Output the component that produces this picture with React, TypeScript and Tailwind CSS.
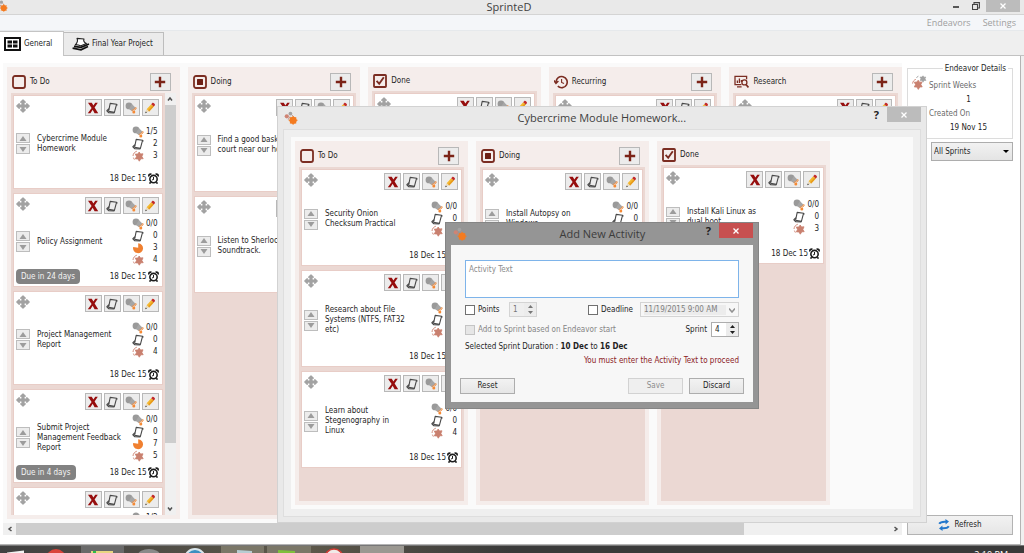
import React from "react";
import clsx from "clsx";

type CardData = {
  text?: string;
  points?: string;
  notes?: string;
  pie?: string;
  sprint?: string;
  date?: string;
  due?: string;
  short?: boolean;
};

type ColumnData = {
  title: string;
  icon: "todo" | "doing" | "done" | "recurring" | "research";
  cards: CardData[];
};

const boardColumns: ColumnData[] = [
  {
    title: "To Do",
    icon: "todo",
    cards: [
      { text: "Cybercrime Module\nHomework", points: "1/5", notes: "2", sprint: "3", date: "18 Dec 15" },
      { text: "Policy Assignment", points: "0/0", notes: "0", pie: "3", sprint: "4", date: "18 Dec 15", due: "Due in 24 days" },
      { text: "Project Management\nReport", points: "0/0", notes: "0", sprint: "4", date: "18 Dec 15" },
      { text: "Submit Project\nManagement Feedback\nReport", points: "0/0", notes: "0", pie: "7", sprint: "5", date: "18 Dec 15", due: "Due in 4 days" },
      { points: "1/2", notes: "0", pie: "1", sprint: "5" },
    ],
  },
  {
    title: "Doing",
    icon: "doing",
    cards: [{ text: "Find a good basketball\ncourt near our house" }, { text: "Listen to Sherlock\nSoundtrack." }],
  },
  { title: "Done", icon: "done", cards: [{}] },
  { title: "Recurring", icon: "recurring", cards: [{ short: true }] },
  { title: "Research", icon: "research", cards: [{ short: true }] },
];

const homeworkColumns: ColumnData[] = [
  {
    title: "To Do",
    icon: "todo",
    cards: [
      { text: "Security Onion\nChecksum Practical", points: "0/0", notes: "0", sprint: "3", date: "18 Dec 15" },
      { text: "Research about File\nSystems (NTFS, FAT32\netc)", points: "0/0", notes: "0", sprint: "4", date: "18 Dec 15" },
      { text: "Learn about\nStegenography in\nLinux", points: "0/0", notes: "0", sprint: "4", date: "18 Dec 15" },
    ],
  },
  {
    title: "Doing",
    icon: "doing",
    cards: [{ text: "Install Autopsy on\nWindows", points: "0/0", notes: "0", sprint: "3", date: "18 Dec 15" }],
  },
  {
    title: "Done",
    icon: "done",
    cards: [{ text: "Install Kali Linux as\ndual boot", points: "0/0", notes: "0", sprint: "3", date: "18 Dec 15" }],
  },
];

/* Icons */

function LogoIcon({ className }: { className?: string }) {
  return (
    <svg viewBox="0 0 12 12" className={className}>
      <circle cx="5.5" cy="2.2" r="1.6" fill="#a3a3a3" />
      <circle cx="2.4" cy="4.6" r="1.8" fill="#cf8474" />
      <path d="M5 4.8 3.6 7.4M6.6 3.4l1.6 1.4" stroke="#b98b80" strokeWidth="0.8" />
      <circle cx="7.8" cy="8" r="3.1" fill="#f47b20" />
      <path d="M7.8 4.2v7.6M4 8h7.6M5.2 5.4l5.2 5.2M10.4 5.4l-5.2 5.2" stroke="#f47b20" strokeWidth="0.9" />
    </svg>
  );
}

function MoveIcon() {
  return (
    <svg viewBox="0 0 14 14" className="h-3.5 w-3.5" fill="#a2a2a2" stroke="#a2a2a2" strokeLinejoin="round">
      <path d="M7 .8 9.400 3.200H4.600zM7 13.200 4.600 10.800h4.800zM.8 7l2.400-2.400v4.800zM13.200 7l-2.400 2.400V4.600z" strokeWidth="1.2" />
      <path d="M7 3v8M3 7h8" strokeWidth="3.200" />
    </svg>
  );
}

function CrossIcon() {
  return (
    <svg viewBox="0 0 12 12" className="h-3 w-3">
      <path d="M1 .8h3.800L6.400 3.600 8.200.8h2.600L7.600 5.400l3.600 5.800H7.600L5.700 7.800 3.400 11.200H.8l3.800-5.300z" fill="#960e0e" />
    </svg>
  );
}

function NoteIcon() {
  return (
    <svg viewBox="0 0 12 12" className="h-3 w-3" fill="none" stroke="#484848" strokeLinejoin="round">
      <path d="M4.200 1.400 10.600 2.200 8.400 10.400 2.600 9.200z" strokeWidth="1.100" />
      <path d="M10.600 2.200 11.200 3.400M3 6.800.9 8.800l1.700 1.800 5.800.2" strokeWidth="1.200" />
    </svg>
  );
}

function TorchIcon() {
  return (
    <svg viewBox="0 0 12 12" className="h-3 w-3">
      <circle cx="4" cy="3.900" r="3.400" fill="#9a9a9a" />
      <path d="M4 6.900 7 9.200 10.800 6 6.800 2z" fill="#a6a6a6" />
      <path d="m6.800 8.400 1.600-.4 2.400-2.600.4 1.400-2 1.600" stroke="#ef8b3e" strokeWidth="0.900" fill="none" />
      <circle cx="8.800" cy="10" r="1.500" fill="#f58a35" />
    </svg>
  );
}

function PencilIcon() {
  return (
    <svg viewBox="0 0 12 12" className="h-3 w-3">
      <path d="m2.6 7.2 4.6-5 2.6 2.2-4.6 5z" fill="#f4b92f" />
      <path d="m4 8.4 4.6-5 1.2 1-4.6 5z" fill="#e79a1d" />
      <path d="M7.2 2.2 8.3 1c.8-.9 3.4 1.2 2.6 2.2L9.8 4.4z" fill="#c22a2a" />
      <path d="M2.6 7.2 1.4 10.8l3.8-1.4z" fill="#ead9b8" />
      <path d="m1.8 9.5-.6 1.7 1.8-.7z" fill="#333" />
    </svg>
  );
}

function SprintIcon() {
  return (
    <svg viewBox="0 0 12 12" className="h-3 w-3">
      <path d="m7.200 2 1.300 2 2.500-.2L9.900 6.400l1.300 2.300-2.400.1-1.500 2.400-1.400-2.300-2.500 0 1.100-2.500-1.200-2.300 2.500-.1z" fill="#c9806f" stroke="#c9806f" strokeWidth="0.800" />
      <path d="M4.800 1.200C2.600 2 1.200 3.600 1 6M1.400 7.600l1 2" fill="none" stroke="#d08c7c" strokeWidth="1" />
    </svg>
  );
}

function SprintWeeksIcon() {
  return (
    <svg viewBox="0 0 15 15" className="h-[15px] w-[15px]">
      <path d="m11 .8 1 1.400 1.800-.2-.8 1.800 1 1.600-1.900.1L11 7.200 9.900 5.500 8 5.400l.9-1.700L8 2l1.900.1z" fill="#a2a2a2" stroke="#a2a2a2" strokeWidth="0.600" />
      <path d="M6.400 1.200 4.400 2.600" stroke="#a2a2a2" strokeWidth="1" />
      <path d="m6.200 5.200 1.300 2 2.500-.2-1.100 2.600 1.300 2.300-2.400.1-1.500 2.400L4.900 12l-2.500 0 1.100-2.500-1.200-2.300 2.500-.1z" fill="#c9806f" stroke="#c9806f" strokeWidth="0.800" />
      <path d="M3.800 4.400C2 5 .8 6.400.6 8.600" fill="none" stroke="#d08c7c" strokeWidth="1" />
    </svg>
  );
}

function PieIcon() {
  return (
    <svg viewBox="0 0 12 12" className="h-3 w-3">
      <path d="M6.200 5.800V1.200A5 5 0 1 1 1.200 5z" fill="#f08030" />
    </svg>
  );
}

function AlarmIcon() {
  return (
    <svg viewBox="0 0 12 12" className="h-[11px] w-[11px]" fill="none" stroke="#1c1c1c">
      <circle cx="6" cy="6.600" r="4" strokeWidth="1.700" />
      <path d="M6 4.400v2.400l-1.400.9" strokeWidth="1.100" />
      <path d="M1 3.800C.6 1.800 2 .8 3.800 1.400M11 3.800C11.400 1.800 10 .8 8.200 1.400" strokeWidth="1.800" />
      <path d="m3 10-1.400 1.600M9 10l1.400 1.600" strokeWidth="1.700" />
    </svg>
  );
}

function PlusIcon() {
  return (
    <svg viewBox="0 0 12 12" className="h-3 w-3">
      <path d="M6 .8v10.4M.8 6h10.4" stroke="#7b2418" strokeWidth="2.4" />
    </svg>
  );
}

function ColumnIcon({ name }: { name: ColumnData["icon"] }) {
  if (name === "recurring") {
    return (
      <svg viewBox="0 0 14 14" className="h-3.5 w-3.5" fill="none" stroke="#7b2d22" strokeWidth="1.6">
        <path d="M2 7a5.6 5.6 0 1 1 1.8 4.2" />
        <path d="M0 5.6 2 8.2l2.4-2.2" />
        <path d="M7.6 4v3.4l2.4 1.2" strokeWidth="1.1" />
      </svg>
    );
  }
  if (name === "research") {
    return (
      <svg viewBox="0 0 15 14" className="h-3.5 w-[15px]" fill="none" stroke="#7b2d22" strokeWidth="1.3">
        <path d="M7.4 9.6H1V1.4h11.6v2.8M3 11.8h4.6" />
        <path d="M3.4 8V5.6M5.4 8V3.6M7.4 7V5" strokeWidth="1.3" />
        <circle cx="10.4" cy="7.4" r="2.5" />
        <path d="m12 9.4 2.4 3" strokeWidth="1.6" />
      </svg>
    );
  }
  return (
    <svg viewBox="0 0 14 14" className="h-3.5 w-3.5" fill="none" stroke="#7b2d22">
      <rect x="1" y="1" width="12" height="12" rx={name === "done" ? 0.8 : 2} strokeWidth="1.8" />
      {name === "doing" && <rect x="4" y="4" width="6" height="6" rx="0.5" fill="#6d1f14" stroke="none" />}
      {name === "done" && <path d="m3.6 6.8 2.6 3 4.6-6.600" strokeWidth="1.900" />}
    </svg>
  );
}

/* Board */

function ToolButton({ label, children }: { label: string; children: React.ReactNode }) {
  return (
    <button aria-label={label} className="flex h-[17px] w-[17px] items-center justify-center border border-[#b8b8b8] bg-[#ececec]">
      {children}
    </button>
  );
}

function ArrowButton({ down }: { down?: boolean }) {
  return (
    <button aria-label={down ? "Move down" : "Move up"} className="flex h-2.5 w-3.5 items-center justify-center border border-[#bdbdbd] bg-[#ececec]">
      <svg viewBox="0 0 8 5" className="h-[5px] w-2" fill="#9c9c9c">
        <path d={down ? "M.5 0h7L4 5z" : "M.5 5h7L4 0z"} />
      </svg>
    </button>
  );
}

function Stat({ icon, value }: { icon: React.ReactNode; value: string }) {
  return (
    <div className="flex h-3 items-center justify-between">
      {icon}
      <span>{value}</span>
    </div>
  );
}

function Card({ card, compact }: { card: CardData; compact?: boolean }) {
  return (
    <article className={clsx("flex shrink-0 flex-col bg-white pt-[3px] pr-[3px] pb-[2px] pl-[2px] outline outline-[#e8cdc7]", compact ? "h-[92px]" : "h-[95px]")}>
      <div className="flex items-start justify-between">
        <MoveIcon />
        <div className="flex gap-[2px]">
          <ToolButton label="Delete"><CrossIcon /></ToolButton>
          <ToolButton label="Notes"><NoteIcon /></ToolButton>
          {!card.short && <ToolButton label="Points"><TorchIcon /></ToolButton>}
          <ToolButton label="Edit"><PencilIcon /></ToolButton>
        </div>
      </div>
      <div className="flex min-h-0 flex-1 items-center">
        <div className="flex flex-col gap-px">
          <ArrowButton />
          <ArrowButton down />
        </div>
        <p className="ml-[7px] flex-1 whitespace-pre leading-[10px]">{card.text}</p>
        {card.points && (
          <div className="w-[27px] pr-px">
            <Stat icon={<TorchIcon />} value={card.points} />
            <Stat icon={<NoteIcon />} value={card.notes ?? "0"} />
            {card.pie && <Stat icon={<PieIcon />} value={card.pie} />}
            <Stat icon={<SprintIcon />} value={card.sprint ?? "0"} />
          </div>
        )}
      </div>
      <div className="flex h-[15px] items-center justify-between">
        {card.due ? <span className="rounded bg-[#828282] px-[5px] leading-[15px] text-[#f4f4f4]">{card.due}</span> : <span />}
        {card.date && (
          <span className="flex items-center gap-px">
            {card.date}
            <AlarmIcon />
          </span>
        )}
      </div>
    </article>
  );
}

function Chevron({ d }: { d: string }) {
  return (
    <svg viewBox="0 0 6 6" className="h-1.5 w-1.5" fill="none" stroke="#505050" strokeWidth="1.5">
      <path d={d} />
    </svg>
  );
}

function Column({ column, scroll, className }: { column: ColumnData; scroll?: boolean; className?: string }) {
  return (
    <section className={clsx("flex min-h-0 flex-col bg-[#f5edeb] p-1", className)}>
      <header className={clsx("flex shrink-0 items-center justify-between pr-[5px] pl-px", column.icon === "done" ? "h-5" : "h-[22px]")}>
        <h2 className="flex items-center gap-1">
          <ColumnIcon name={column.icon} />
          {column.title}
        </h2>
        {column.icon !== "done" && (
          <button aria-label="Add activity" className="flex h-[18px] w-[21px] items-center justify-center border border-[#b8b8b8] bg-[#ececec]">
            <PlusIcon />
          </button>
        )}
      </header>
      <div className="flex min-h-0 flex-1">
        <div className="flex min-w-0 flex-1 flex-col gap-1.5 overflow-hidden bg-[#ebd8d3] p-[3px]">
          {column.cards.map((card, i) => (
            <Card key={i} card={card} compact={scroll} />
          ))}
        </div>
        {scroll && (
          <div className="flex w-[11px] flex-col bg-[#f0f0f0]">
            <button aria-label="Scroll up" className="flex h-3 items-center justify-center"><Chevron d="M1 4.5 3 2l2 2.5" /></button>
            <div className="h-4/5 bg-[#cdcdcd]" />
            <button aria-label="Scroll down" className="mt-auto flex h-3 items-center justify-center"><Chevron d="M1 1.5 3 4l2-2.5" /></button>
          </div>
        )}
      </div>
    </section>
  );
}

/* Dialogs */

function HomeworkDialog() {
  return (
    <div role="dialog" aria-label="Cybercrime Module Homework" className="absolute top-[106px] left-[277px] flex h-[417px] w-[650px] flex-col border border-[#d2d2d2] bg-[#e9e9e9] px-[5px] pb-[5px]">
      <div className="flex h-[22px] shrink-0 justify-between">
        <LogoIcon className="mt-1 ml-px h-3.5 w-3.5" />
        <h2 className="self-center pl-8 font-['Open_Sans',sans-serif] text-[11px] text-[#3f3f3f]">Cybercrime Module Homework...</h2>
        <div className="flex items-start">
          <button aria-label="Help" className="mr-2 font-['Open_Sans',sans-serif] text-[11px] leading-4 font-bold text-[#222]">?</button>
          <button aria-label="Close" className="flex h-[15px] w-[34px] items-center justify-center bg-[#bcbcbc]">
            <svg viewBox="0 0 6 6" className="h-1.5 w-1.5" stroke="#fff" strokeWidth="1.3"><path d="M.5.5l5 5M5.5.5l-5 5" /></svg>
          </button>
        </div>
      </div>
      <div className="flex min-h-0 flex-1 flex-col border border-[#dedede] bg-[#efefef] p-[7px]">
        <div className="flex min-h-0 flex-1 gap-2 bg-[#fafafa] p-1">
          {homeworkColumns.map((column) => (
            <Column key={column.title} column={column} className="w-[173px]" />
          ))}
        </div>
      </div>
    </div>
  );
}

function SpinArrows() {
  return (
    <div className="flex w-3 flex-col items-center justify-center gap-[3px] bg-[#ececec]">
      <button type="button" aria-label="Increase"><svg viewBox="0 0 5 3" className="h-[3px] w-[5px]" fill="currentColor"><path d="M0 3h5L2.5 0z" /></svg></button>
      <button type="button" aria-label="Decrease"><svg viewBox="0 0 5 3" className="h-[3px] w-[5px]" fill="currentColor"><path d="M0 0h5L2.5 3z" /></svg></button>
    </div>
  );
}

function ActivityDialog() {
  const button = "h-4 w-[55px] border border-[#adadad] bg-linear-to-b from-[#f2f2f2] to-[#e6e6e6]";
  const checkbox = "h-2.5 w-2.5 appearance-none border";
  return (
    <div role="dialog" aria-label="Add New Activity" className="absolute top-[222px] left-[445px] flex w-[314px] flex-col border border-[#858585] bg-[#959595] px-[5px] pb-1.5">
      <div className="flex h-[22px] justify-between">
        <LogoIcon className="mt-1 ml-0.5 h-3.5 w-3.5" />
        <h2 className="self-center pl-8 font-['Open_Sans',sans-serif] text-[11px] text-[#3c3c3c]">Add New Activity</h2>
        <div className="flex items-start">
          <button aria-label="Help" className="mr-2 font-['Open_Sans',sans-serif] text-[11px] leading-4 font-bold text-[#222]">?</button>
          <button aria-label="Close" className="flex h-[15px] w-[34px] items-center justify-center bg-[#c75050]">
            <svg viewBox="0 0 6 6" className="h-1.5 w-1.5" stroke="#fff" strokeWidth="1.3"><path d="M.5.5l5 5M5.5.5l-5 5" /></svg>
          </button>
        </div>
      </div>
      <form className="bg-[#f7f7f7] pt-[15px] pb-2">
        <div className="flex flex-col px-3.5">
          <textarea aria-label="Activity Text" placeholder="Activity Text" className="h-[38px] resize-none border border-[#7eb4ea] bg-white px-[3px] py-1 leading-[10px] placeholder:text-[#8c8c8c]" />
          <div className="mt-1 flex h-[15px] items-center justify-between">
            <div className="flex h-full items-center">
              <input id="points" type="checkbox" className={clsx(checkbox, "border-[#707070] bg-white")} />
              <label htmlFor="points" className="ml-[3px] w-[31px]">Points</label>
              <div className="flex h-full w-7 border border-[#d4d4d4] bg-[#efefef] text-[#777]">
                <input aria-label="Points value" defaultValue="1" disabled className="w-0 flex-1 pl-[3px]" />
                <SpinArrows />
              </div>
            </div>
            <div className="flex h-full items-center">
              <input id="deadline" type="checkbox" className={clsx(checkbox, "border-[#707070] bg-white")} />
              <label htmlFor="deadline" className="ml-[3px] w-[39px]">Deadline</label>
              <div className="flex h-full w-[99px] items-center border border-[#d4d4d4] bg-[#f7f7f7] pl-[3px] text-[#808080]">
                <input aria-label="Deadline date" defaultValue="11/19/2015 9:00 AM" disabled className="w-0 flex-1 bg-[#ececec]" />
                <span className="flex w-3 justify-center opacity-60"><Chevron d="M0 1.5 3 5l3-3.5" /></span>
              </div>
            </div>
          </div>
          <div className="mt-[5px] flex h-[15px] items-center justify-between">
            <div className="flex items-center gap-[3px] text-[#858585]">
              <input id="based" type="checkbox" disabled className={clsx(checkbox, "border-[#c4c4c4] bg-[#e6e6e6]")} />
              <label htmlFor="based">Add to Sprint based on Endeavor start</label>
            </div>
            <div className="flex h-full items-center gap-1">
              <label htmlFor="sprint">Sprint</label>
              <div className="flex h-full w-7 border border-[#adadad] bg-white">
                <input id="sprint" defaultValue="4" className="w-0 flex-1 pl-[3px]" />
                <SpinArrows />
              </div>
            </div>
          </div>
          <p className="mt-[3px] leading-[14px]">
            Selected Sprint Duration : <b>10 Dec</b> to <b>16 Dec</b>
          </p>
          <p className="text-right leading-[14px] text-[#8b1a24]">You must enter the Activity Text to proceed</p>
        </div>
        <div className="mt-2.5 flex gap-1.5 px-[9px]">
          <button type="button" className={button}>Reset</button>
          <button type="button" disabled className="ml-auto h-4 w-[55px] border border-[#d2d2d2] bg-[#efefef] text-[#8c8c8c]">Save</button>
          <button type="button" className={button}>Discard</button>
        </div>
      </form>
    </div>
  );
}

/* Main window */

function TitleBar() {
  return (
    <div className="flex h-[15px] shrink-0 items-start justify-between border-b border-[#d4d4d4] bg-[#e9e9e9] pr-1">
      <LogoIcon className="-ml-1 h-3 w-3" />
      <h1 className="pl-16 font-['Open_Sans',sans-serif] text-[11px] leading-[14px] text-[#3f3f3f]">SprinteD</h1>
      <div className="flex">
        <button aria-label="Minimize" className="flex h-3 w-5 items-center justify-center">
          <svg viewBox="0 0 8 8" className="h-2 w-2"><path d="M1 5h6" stroke="#333" strokeWidth="1.6" /></svg>
        </button>
        <button aria-label="Restore" className="flex h-3 w-5 items-center justify-center">
          <svg viewBox="0 0 8 8" className="h-2 w-2" fill="none" stroke="#444"><path d="M.5 2.5h5v5h-5zM2 2V.6h5.4V6H6" strokeWidth="1.1" /></svg>
        </button>
        <button aria-label="Close" className="flex h-3 w-[34px] items-center justify-center bg-[#bcbcbc]">
          <svg viewBox="0 0 6 6" className="h-1.5 w-1.5" stroke="#fff" strokeWidth="1.3"><path d="M.5.5l5 5M5.5.5l-5 5" /></svg>
        </button>
      </div>
    </div>
  );
}

function Tabs() {
  return (
    <div role="tablist" className="flex h-[25px] shrink-0 items-end border-b border-[#c2c2c2] bg-[#efefef]">
      <button role="tab" aria-selected="true" className="-mb-px flex h-[25px] w-16 items-center gap-[3px] border-t border-r border-[#c4c4c4] bg-white pl-1">
        <svg viewBox="0 0 17 14" className="h-3.5 w-[17px]">
          <rect x="1" y="1" width="15" height="12" fill="#fff" stroke="#111" strokeWidth="2" />
          <path d="M3.500 3.500H8v3H3.500zM9 3.500h4.500v3H9zM3.500 7.500H8v3H3.500zM9 7.500h4.500v3H9z" fill="#111" />
        </svg>
        General
      </button>
      <button role="tab" aria-selected="false" className="flex h-[23px] w-[100px] items-center gap-[2px] border-t border-r border-[#bdbdbd] bg-[#ebebeb] pl-2">
        <svg viewBox="0 0 18 14" className="h-3.5 w-[18px]">
          <path d="M5 1.4 12 2c-.8 1.8.2 3.4 2.4 4.6L9 8.8C6.600 8 5 7.400 3.200 8 5.400 5.600 6.200 3.600 5 1.400z" fill="#fff" stroke="#222" strokeWidth="1.1" strokeLinejoin="round" />
          <path d="M2 9.400 9 10.400 17 7M.6 11.200 9 12.800 16 9.600" fill="none" stroke="#111" strokeWidth="1.700" />
        </svg>
        Final Year Project
      </button>
    </div>
  );
}

function Sidebar() {
  return (
    <aside className="flex w-[106px] shrink-0 flex-col">
      <fieldset className="border border-[#dcdcdc] px-1 pb-[3px]">
        <legend className="ml-auto px-0.5 leading-[11px]">Endeavor Details</legend>
        <div className="flex gap-[2px]">
          <span className="shrink-0 pt-px"><SprintWeeksIcon /></span>
          <dl className="flex-1 pt-[5px] leading-[14px]">
            <dt className="text-[#6a6a6a]">Sprint Weeks</dt>
            <dd className="text-center">1</dd>
            <dt className="text-[#6a6a6a]">Created On</dt>
            <dd className="text-center">19 Nov 15</dd>
          </dl>
        </div>
      </fieldset>
      <div className="relative mt-[3px] ml-6">
        <select aria-label="Sprint filter" className="h-[19px] w-full appearance-none border border-[#adadad] bg-linear-to-b from-[#f2f2f2] to-[#e4e4e4] pl-0.5">
          <option>All Sprints</option>
        </select>
        <svg viewBox="0 0 6 3" className="pointer-events-none absolute top-2 right-1 h-[3px] w-1.5"><path d="M0 0h6L3 3z" /></svg>
      </div>
      <button className="mt-auto flex h-5 items-center justify-center gap-1 border border-[#b3b3b3] bg-linear-to-b from-[#f2f2f2] to-[#e6e6e6]">
        <svg viewBox="0 0 12 12" className="h-3 w-3" fill="none" stroke="#2277cc" strokeWidth="1.900">
          <path d="M1.200 4.800C2.400 2.800 5 2.600 8 2.800M10.800 7.200C9.600 9.200 7 9.400 4 9.200" />
          <path d="M7.400 0 11 2.600 7.600 5.400zM4.600 12 1 9.400l3.400-2.800z" fill="#2277cc" stroke="none" />
        </svg>
        Refresh
      </button>
    </aside>
  );
}

function Taskbar() {
  return (
    <footer className="h-2 shrink-0 overflow-hidden border-t border-[#777] bg-linear-to-r from-[#414141] via-[#5d584a] via-30% to-[#393939] to-50%">
      <div className="flex h-5 items-start">
        <svg viewBox="0 0 410 7" className="h-[7px] w-[410px] shrink-0">
          <path d="M7 6.500 24 4.500V7H7z" fill="#f2f2f2" />
          <circle cx="56" cy="13" r="10" fill="#d9443a" />
          <path d="M81 0h43v7H81z" fill="#6a6a6a" />
          <path d="M91 5h22v2H91z" fill="#e8d680" />
          <path d="M93 5h3v2h-3z" fill="#2ebd4a" />
          <ellipse cx="149" cy="9" rx="11" ry="6" fill="#8a8a8a" />
          <circle cx="195" cy="13" r="10" fill="#3d8fc0" stroke="#d9e6ec" strokeWidth="2" />
          <path d="M221 0h43v7h-43zM267 0h44v7h-44z" fill="#7b7768" />
          <path d="m237 4 15 1v2h-15z" fill="#b8ccd2" />
          <path d="m278 4 17 1v2h-17z" fill="#7fbf3c" />
          <circle cx="334" cy="12" r="9" fill="#f0ebe8" stroke="#d23c34" strokeWidth="1.500" />
          <path d="M360 0h44v7h-44z" fill="#9b9891" />
        </svg>
        <span className="ml-auto pt-[3px] pr-4 font-['Open_Sans',sans-serif] text-[9px] leading-3 text-white">2:10 PM</span>
      </div>
    </footer>
  );
}

export default function App() {
  return (
    <div className="relative flex h-screen flex-col overflow-hidden bg-[#f0f0f0] font-['DejaVu_Sans_Condensed','DejaVu_Sans',sans-serif] text-[8px] leading-[10px] text-[#1e1e1e]">
      <TitleBar />
      <nav className="flex h-4 shrink-0 items-center justify-end gap-3 border-b border-[#e6e9ec] bg-[#f4f6f9] pr-2 font-['Open_Sans',sans-serif] text-[9px] text-[#a0a0a0]">
        <a href="#endeavors">Endeavors</a>
        <a href="#settings">Settings</a>
      </nav>
      <Tabs />
      <main className="mr-[3px] flex min-h-0 flex-1 gap-[5px] border-r border-b border-[#b4b4b4] bg-white pt-[7px] pr-[7px] pb-[9px] pl-[3px]">
        <div className="flex min-w-0 flex-1 flex-col bg-[#fafafa]">
          <div className="flex min-h-0 flex-1 gap-2 py-1 pl-1">
            {boardColumns.map((column, i) => (
              <Column key={column.title} column={column} scroll={i === 0} className="min-w-0 flex-1" />
            ))}
          </div>
          <div className="flex h-3 shrink-0 bg-[#f0f0f0]">
            <button aria-label="Scroll left" className="flex w-[13px] items-center justify-center"><Chevron d="M4.500 1 2 3l2.500 2" /></button>
            <div className="w-[81%] bg-[#cdcdcd]" />
            <button aria-label="Scroll right" className="ml-auto flex w-3 items-center justify-center"><Chevron d="M1.500 1 4 3 1.500 5" /></button>
          </div>
        </div>
        <Sidebar />
      </main>
      <Taskbar />
      <HomeworkDialog />
      <ActivityDialog />
    </div>
  );
}
